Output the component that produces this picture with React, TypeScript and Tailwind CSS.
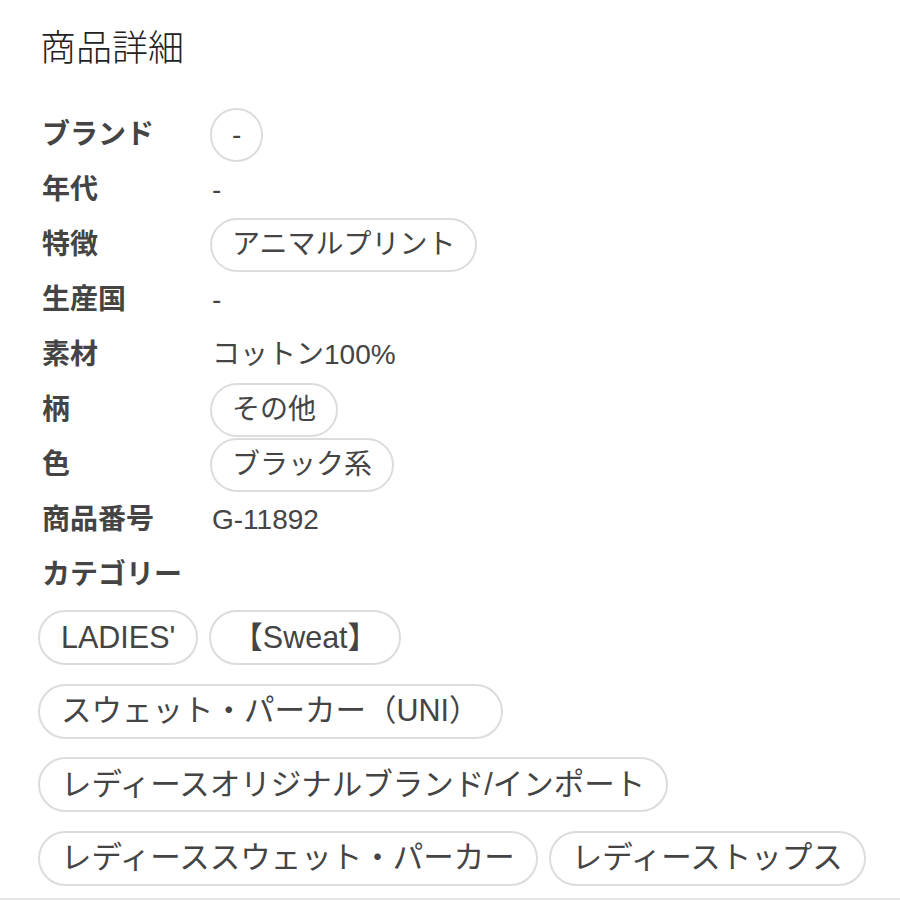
const specs: { label: string; value: string; chip?: boolean }[] = [
  { label: 'ブランド', value: '-', chip: true },
  { label: '年代', value: '-' },
  { label: '特徴', value: 'アニマルプリント', chip: true },
  { label: '生産国', value: '-' },
  { label: '素材', value: 'コットン100%' },
  { label: '柄', value: 'その他', chip: true },
  { label: '色', value: 'ブラック系', chip: true },
  { label: '商品番号', value: 'G-11892' },
]

const categories = [
  "LADIES'",
  '【Sweat】',
  'スウェット・パーカー（UNI）',
  'レディースオリジナルブランド/インポート',
  'レディーススウェット・パーカー',
  'レディーストップス',
]

export default function App() {
  return (
    <div
      className="h-[900px] overflow-hidden bg-white text-[#3a3a3a] border-b-2 border-[#e6e6e6]"
      style={{ fontFamily: '"Liberation Sans", "Noto Sans CJK JP", sans-serif' }}
    >
      <div className="pl-[38px] pr-[30px] pt-[27px]">
        <h2 className="text-[36px] leading-[44px] font-light text-[#222] ml-[2px]">商品詳細</h2>

        <div className="mt-[36px]">
          {specs.map((s) => (
            <div key={s.label} className="flex items-center h-[55px]">
              <div className="w-[172px] pl-[4px] text-[28px] font-bold text-[#444]">{s.label}</div>
              {s.chip ? (
                <span className="inline-flex items-center justify-center h-[54px] px-[20px] rounded-full border-2 border-[#dcdcdc] text-[28px] text-[#444]">
                  {s.value}
                </span>
              ) : (
                <span className="pl-[2px] text-[28px] text-[#444]">{s.value}</span>
              )}
            </div>
          ))}
          <div className="flex items-center h-[55px]">
            <div className="pl-[4px] text-[28px] font-bold text-[#444]">カテゴリー</div>
          </div>
        </div>

        <div className="mt-[8px] flex flex-wrap gap-x-[11px] gap-y-[18.5px]">
          {categories.map((c) => (
            <span
              key={c}
              className="inline-flex items-center h-[55px] px-[21px] rounded-full border-2 border-[#dcdcdc] text-[30.5px] text-[#444] whitespace-nowrap"
            >
              {c}
            </span>
          ))}
        </div>
      </div>
    </div>
  )
}
